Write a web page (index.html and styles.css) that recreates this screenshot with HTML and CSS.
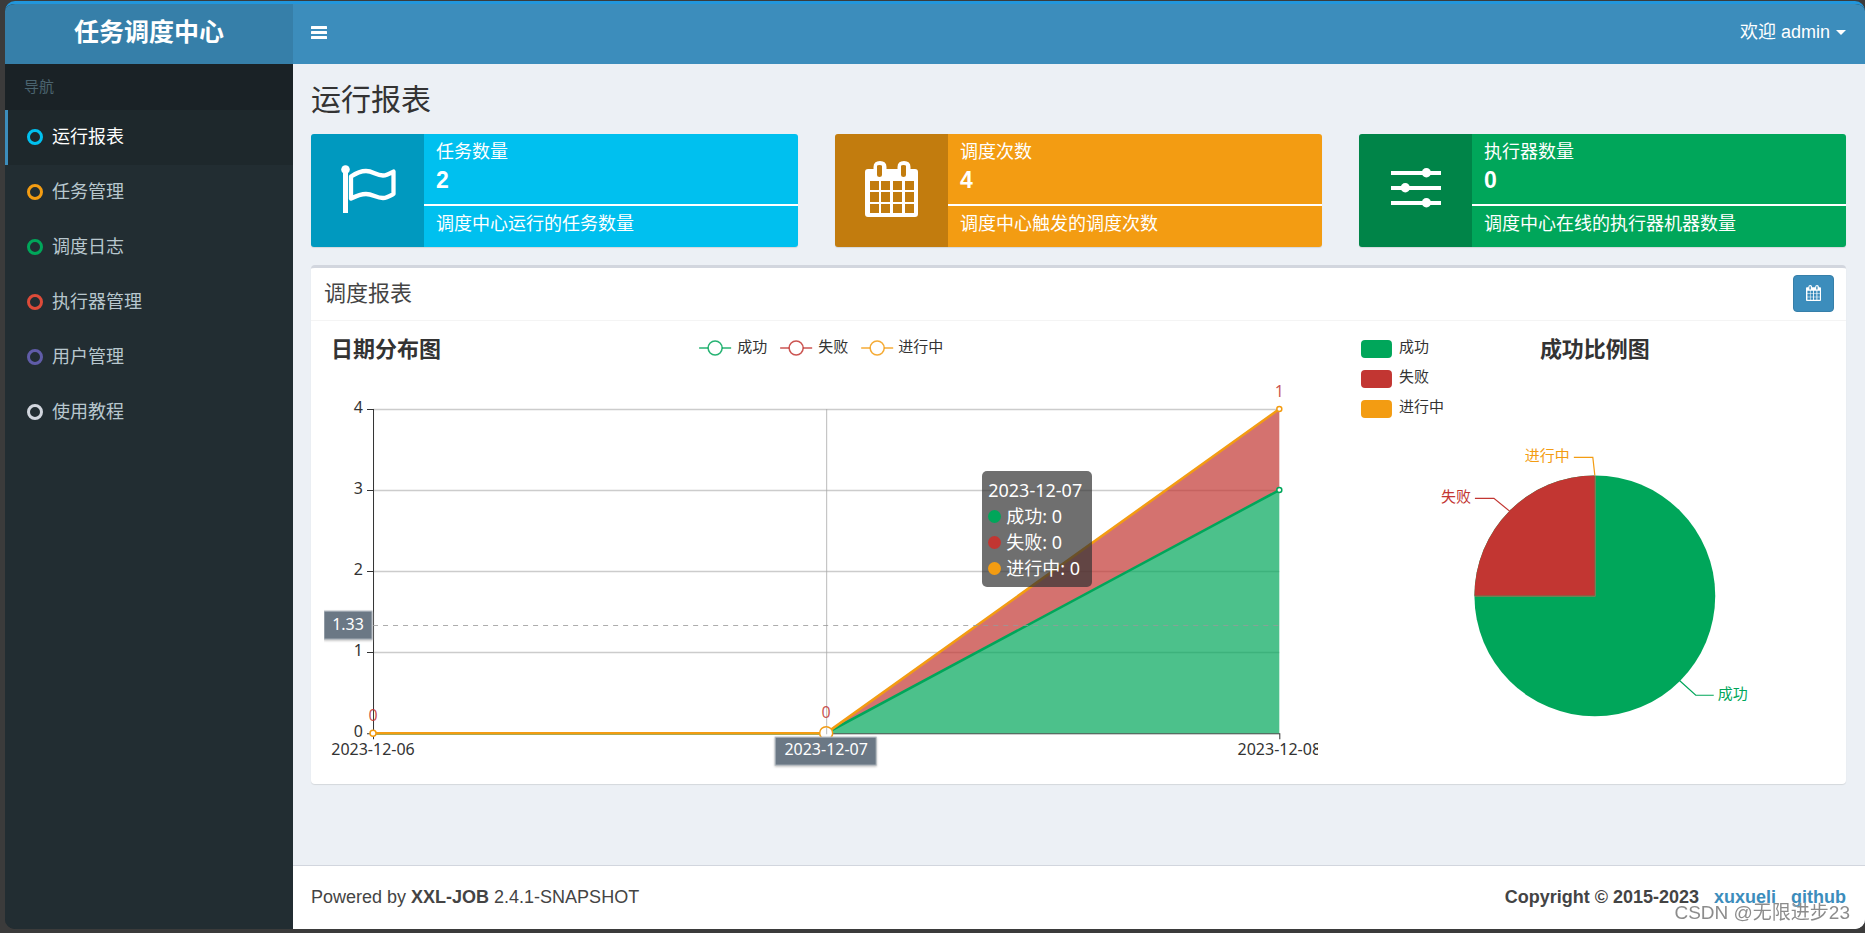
FILE: index.html
```html
<!DOCTYPE html>
<html lang="zh-CN">
<head>
<meta charset="utf-8">
<title>任务调度中心</title>
<link rel="stylesheet" href="styles.css">
</head>
<body>
<svg class="sprite" aria-hidden="true">
  <symbol id="calendar" viewBox="0 0 53 56">
    <path fill="currentColor" fill-rule="evenodd" d="M3 8h5.500V6q0-6 6.500-6t6.500 6v2h11V6q0-6 6.500-6t6.500 6v2H50q3 0 3 3v42q0 3-3 3H3q-3 0-3-3V11q0-3 3-3z M12 5v9q0 2 2.500 2t2.500-2V5q0-1-2.500-1T12 5z M36 5v9q0 2 2.500 2t2.500-2V5q0-1-2.500-1T36 5z M5 20v9h9v-9z M16 20v9h9v-9z M28 20v9h9v-9z M40 20v9h9v-9z M5 31v10h9V31z M16 31v10h9V31z M28 31v10h9V31z M40 31v10h9V31z M5 43v9h9v-9z M16 43v9h9v-9z M28 43v9h9v-9z M40 43v9h9v-9z"/>
  </symbol>
</svg>
<div class="window">
  <header class="topbar">
    <a class="logo" href="#">任务调度中心</a>
    <nav class="navbar">
      <button class="toggle" type="button" aria-label="切换导航">
        <svg width="16" height="13" viewBox="0 0 16 13" fill="currentColor"><rect width="16" height="3" rx=".5"/><rect y="5" width="16" height="3" rx=".5"/><rect y="10" width="16" height="3" rx=".5"/></svg>
      </button>
      <button class="user" type="button">欢迎 admin<span class="caret"></span></button>
    </nav>
  </header>
  <div class="main">
    <aside class="sidebar">
      <div class="nav-label">导航</div>
      <ul class="menu">
        <li><a class="item active" href="#"><span class="ring aqua"></span>运行报表</a></li>
        <li><a class="item" href="#"><span class="ring yellow"></span>任务管理</a></li>
        <li><a class="item" href="#"><span class="ring green"></span>调度日志</a></li>
        <li><a class="item" href="#"><span class="ring red"></span>执行器管理</a></li>
        <li><a class="item" href="#"><span class="ring purple"></span>用户管理</a></li>
        <li><a class="item" href="#"><span class="ring gray"></span>使用教程</a></li>
      </ul>
    </aside>
    <div class="page">
      <main class="content">
        <h1 class="page-title">运行报表</h1>
        <section class="cards">
          <div class="card card-aqua">
            <div class="card-icon">
              <svg width="56" height="51" viewBox="0 0 56 51"><circle cx="5.500" cy="4.500" r="4.300" fill="#fff"/><path d="M5.500 5v43" stroke="#fff" stroke-width="5"/><path d="M11 11.500C17 7.500 21 6 26 6c7 0 10 4.500 17 4.500 4 0 7-2 10.500-4v22.500C50 31 47 33 43 33c-7 0-10-4-17-4-5 0-9 1.500-15 4.500z" fill="none" stroke="#fff" stroke-width="4.300" stroke-linejoin="round"/></svg>
            </div>
            <div class="card-body"><div class="card-top"><span>任务数量</span><strong>2</strong></div><div class="card-desc">调度中心运行的任务数量</div></div>
          </div>
          <div class="card card-yellow">
            <div class="card-icon card-icon-high"><svg width="53" height="56"><use href="#calendar"/></svg></div>
            <div class="card-body"><div class="card-top"><span>调度次数</span><strong>4</strong></div><div class="card-desc">调度中心触发的调度次数</div></div>
          </div>
          <div class="card card-green">
            <div class="card-icon">
              <svg width="50" height="45" viewBox="0 0 50 45" fill="#fff"><path d="M0 3h50v4H0zM0 18h50v4H0zM0 33h50v4H0z"/><circle cx="35.400" cy="4.700" r="4.700"/><circle cx="14.300" cy="19.700" r="4.700"/><circle cx="35.400" cy="34.700" r="4.700"/></svg>
            </div>
            <div class="card-body"><div class="card-top"><span>执行器数量</span><strong>0</strong></div><div class="card-desc">调度中心在线的执行器机器数量</div></div>
          </div>
        </section>
        <section class="box">
          <div class="box-head">
            <h2 class="box-title">调度报表</h2>
            <button class="date-btn" type="button" aria-label="选择日期"><svg width="15" height="16"><use href="#calendar"/></svg></button>
          </div>
          <div class="box-body">
            <div class="chart chart-line">
              <svg viewBox="0 0 994 438">
                <text class="chart-title" x="7" y="23">日期分布图</text>
                <g class="legend">
                  <g stroke="#00a65a"><path d="M375 14h32"/><circle cx="391" cy="14" r="7"/></g>
                  <g stroke="#c23632"><path d="M456 14h32"/><circle cx="472" cy="14" r="7"/></g>
                  <g stroke="#f39c12"><path d="M537 14h32"/><circle cx="553" cy="14" r="7"/></g>
                </g>
                <g class="label"><text x="413" y="18">成功</text><text x="494" y="18">失败</text><text x="574" y="18">进行中</text></g>
                <path class="grid" d="M49 75.500H955M49 156.500H955M49 237.500H955M49 318.500H955"/>
                <path class="axis" d="M49.500 75V405M43 75.500h6M43 156.500h6M43 237.500h6M43 318.500h6M43 399.500H955.500V405M502.500 399v6"/>
                <path d="M502 399L955 156V399z" fill="#00a65a" fill-opacity=".7"/>
                <path d="M502 399L955 75V156z" fill="#c23632" fill-opacity=".7"/>
                <path class="series" stroke="#00a65a" d="M49 399H502L955 156"/>
                <path class="series" stroke="#f39c12" d="M49 399H502L955 75"/>
                <path class="pointer" d="M502.500 75V399"/>
                <path class="pointer dashed" d="M49 291.500H955"/>
                <g fill="#fff" stroke-width="1.500"><circle cx="49" cy="399" r="3" stroke="#f39c12"/><circle cx="502" cy="399" r="6.500" stroke="#f39c12"/><circle cx="955" cy="156" r="2.500" stroke="#00a65a"/><circle cx="955" cy="75" r="2.500" stroke="#f39c12"/></g>
                <path class="pointer" d="M502.500 393v7"/>
                <g class="tick end"><text x="39" y="79">4</text><text x="39" y="160">3</text><text x="39" y="241">2</text><text x="39" y="322">1</text><text x="39" y="403">0</text></g>
                <g class="tick mid"><text x="49" y="421">2023-12-06</text><text x="955" y="421">2023-12-08</text></g>
                <g class="tick mid value"><text x="49" y="387">0</text><text x="502" y="384">0</text><text x="955" y="63">1</text></g>
                <g class="flag"><rect x="0" y="277" width="48" height="28"/><rect x="451" y="403" width="101" height="28"/></g>
                <g class="tick mid flag-text"><text x="24" y="296">1.33</text><text x="502" y="421">2023-12-07</text></g>
              </svg>
              <div class="tooltip">
                <div>2023-12-07</div>
                <div><i class="dot dot-green"></i>成功: 0</div>
                <div><i class="dot dot-red"></i>失败: 0</div>
                <div><i class="dot dot-yellow"></i>进行中: 0</div>
              </div>
            </div>
            <div class="chart chart-pie">
              <svg viewBox="0 0 479 438">
                <text class="chart-title mid" x="240" y="23">成功比例图</text>
                <rect x="6" y="6" width="31" height="18" rx="4" fill="#00a65a"/>
                <rect x="6" y="36" width="31" height="18" rx="4" fill="#c23632"/>
                <rect x="6" y="66" width="31" height="18" rx="4" fill="#f39c12"/>
                <g class="label"><text x="44" y="18">成功</text><text x="44" y="48">失败</text><text x="44" y="78">进行中</text></g>
                <circle cx="240" cy="262" r="120.500" fill="#00a65a"/>
                <path d="M240 262V141.500A120.500 120.500 0 0 0 119.500 262z" fill="#c23632"/>
                <path d="M240.500 142V262.500H120" fill="none" stroke="#8b7a55"/>
                <g fill="none" stroke-width="1.200"><path d="M219 123.500h19l2 18" stroke="#f39c12"/><path d="M120 164.500h19l16 13" stroke="#c23632"/><path d="M325 347l16 14.500h18" stroke="#00a65a"/></g>
                <g class="label"><text class="t-yellow" x="170" y="127">进行中</text><text class="t-red" x="86" y="168">失败</text><text class="t-green" x="363" y="365">成功</text></g>
              </svg>
            </div>
          </div>
        </section>
      </main>
      <footer class="footer">
        <div>Powered by <b>XXL-JOB</b> 2.4.1-SNAPSHOT</div>
        <div class="copyright"><span>Copyright © 2015-2023</span><a href="#">xuxueli</a><a href="#">github</a></div>
      </footer>
    </div>
  </div>
</div>
<div class="watermark">CSDN @无限进步23</div>
</body>
</html>
```
FILE: styles.css
```css
* { box-sizing: border-box; }
body {
  margin: 0;
  padding: 1px 0 4px 5px;
  min-height: 100vh;
  display: flex;
  background: #3b3b3b;
  color: #333;
  font: 18px/25px "Liberation Sans", "Noto Sans CJK SC", sans-serif;
}
button { font: inherit; color: inherit; background: none; border: 0; padding: 0; }
a { text-decoration: none; }
.sprite { display: none; }
.window {
  flex: 1;
  display: flex;
  flex-direction: column;
  overflow: hidden;
  border-radius: 10px;
  border-top: 3px solid #2196dc;
  background: #222d32;
}
.topbar { display: flex; height: 60px; color: #fff; }
.logo {
  width: 288px;
  display: flex;
  align-items: center;
  justify-content: center;
  padding-bottom: 4px;
  background: #367fa9;
  color: #fff;
  font-size: 25px;
  font-weight: 700;
}
.navbar {
  flex: 1;
  display: flex;
  align-items: center;
  justify-content: space-between;
  padding: 0 19px 4px 18px;
  background: #3c8dbc;
}
.toggle svg { display: block; }
.user { display: flex; align-items: center; gap: 6px; }
.caret { border: 5px solid transparent; border-top-color: #fff; border-bottom: 0; }
.main { flex: 1; display: flex; }
.sidebar { width: 288px; background: #222d32; }
.nav-label {
  height: 46px;
  padding: 10px 19px;
  background: #1a2226;
  color: #4b646f;
  font-size: 15px;
}
.menu { list-style: none; margin: 0; padding: 0; }
.item {
  display: flex;
  align-items: center;
  gap: 9px;
  height: 55px;
  padding-left: 19px;
  border-left: 3px solid transparent;
  color: #b8c7ce;
}
.item.active { background: #1e282c; border-left-color: #3c8dbc; color: #fff; }
.ring { width: 16px; height: 16px; margin-bottom: 2px; border: 3px solid; border-radius: 50%; }
.aqua { color: #00c0ef; }
.yellow { color: #f39c12; }
.green { color: #00a65a; }
.red { color: #dd4b39; }
.purple { color: #605ca8; }
.gray { color: #d2d6de; }
.page { flex: 1; min-width: 0; display: flex; flex-direction: column; background: #ecf0f5; }
.content { flex: 1; padding: 18px 19px 18px 18px; }
.page-title { margin: 0 0 16px; font-size: 30px; line-height: 36px; font-weight: 400; }
.cards { display: grid; grid-template-columns: repeat(3, 1fr); gap: 37px; margin-bottom: 18px; }
.card {
  display: flex;
  height: 113px;
  border-radius: 3px;
  overflow: hidden;
  color: #fff;
  box-shadow: 0 1px 1px rgba(0, 0, 0, .1);
}
.card-aqua { background: #00c0ef; }
.card-yellow { background: #f39c12; }
.card-green { background: #00a65a; }
.card-icon {
  width: 113px;
  display: flex;
  align-items: center;
  justify-content: center;
  background: rgba(0, 0, 0, .2);
}
.card-icon-high { padding-bottom: 3px; }
.card-body { flex: 1; }
.card-top { display: flex; flex-direction: column; height: 70px; padding: 5px 12px; line-height: 26px; }
.card-top strong { font-size: 23px; line-height: 30px; }
.card-desc { padding: 5px 12px; border-top: 2px solid #fff; line-height: 26px; }
.box {
  border-top: 3px solid #d2d6de;
  border-radius: 4px;
  background: #fff;
  box-shadow: 0 1px 1px rgba(0, 0, 0, .1);
}
.box-head {
  display: flex;
  align-items: center;
  justify-content: space-between;
  height: 53px;
  padding: 0 12px 0 13px;
  border-bottom: 1px solid #f4f4f4;
}
.box-title { margin: 0; color: #444; font-size: 22px; line-height: 28px; font-weight: 400; }
.date-btn {
  display: flex;
  align-items: center;
  justify-content: center;
  width: 41px;
  height: 37px;
  margin-bottom: 2px;
  border: 1px solid #367fa9;
  border-radius: 4px;
  background: #3c8dbc;
  color: #fff;
}
.box-body { display: grid; grid-template-columns: repeat(12, 1fr); column-gap: 37px; padding: 13px 12px 12px 13px; }
.chart { position: relative; min-width: 0; }
.chart svg { display: block; width: 100%; }
.chart-line { grid-column: span 8; }
.chart-pie { grid-column: span 4; }
.chart text { font-family: "Noto Sans", "Noto Sans CJK SC", sans-serif; }
.chart .chart-title { font-family: "Noto Sans CJK SC", sans-serif; font-size: 22px; font-weight: 700; fill: #333; }
.label { font-size: 15px; fill: #333; }
.tick { font-size: 16px; fill: #333; }
.end { text-anchor: end; }
.mid { text-anchor: middle; }
.value { fill: #c23632; fill-opacity: .85; }
.legend { fill: #fff; stroke-width: 1.5px; stroke-opacity: .85; }
.grid { stroke: #ccc; stroke-width: 1.5px; }
.axis { stroke: #333; fill: none; }
.series { fill: none; stroke-width: 2.5px; }
.pointer { stroke: #aaa; stroke-opacity: .8; fill: none; }
.dashed { stroke: #999; stroke-dasharray: 5 5; }
.flag { fill: #6b7885; stroke: #b4bcc3; filter: drop-shadow(0 1px 1px #bbb); }
.flag-text { fill: #fff; }
.t-yellow { fill: #f39c12; }
.t-red { fill: #c23632; }
.t-green { fill: #00a65a; }
.tooltip {
  position: absolute;
  left: 66.2%;
  top: 31.3%;
  min-width: 110px;
  padding: 6px;
  border-radius: 5px;
  background: rgba(50, 50, 50, .7);
  color: #fff;
  font: 18px/26px "Noto Sans", "Noto Sans CJK SC", sans-serif;
  white-space: nowrap;
}
.dot { display: inline-block; width: 13px; height: 13px; margin-right: 5px; border-radius: 50%; }
.dot-green { background: #00a65a; }
.dot-red { background: #c23632; }
.dot-yellow { background: #f39c12; }
.footer {
  display: flex;
  align-items: center;
  justify-content: space-between;
  height: 64px;
  padding: 0 19px 0 18px;
  border-top: 1px solid #d2d6de;
  background: #fff;
  color: #444;
}
.copyright { display: flex; gap: 15px; font-weight: 700; }
.copyright a { color: #3c8dbc; }
.watermark {
  position: fixed;
  right: 15px;
  bottom: 6px;
  color: rgba(120, 120, 120, .85);
  font: 19px/28px "Liberation Sans", "Noto Sans CJK SC", sans-serif;
  text-shadow: 0 0 1px #fff;
}
```
